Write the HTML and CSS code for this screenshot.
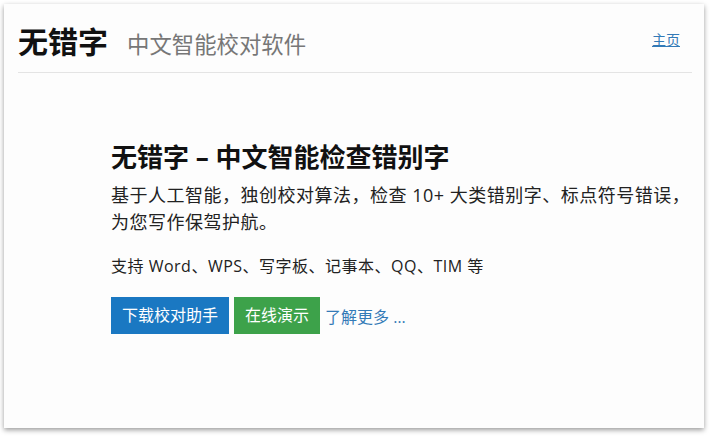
FILE: index.html
```html
<!DOCTYPE html>
<html lang="zh-CN">
<head>
  <meta charset="UTF-8" />
  <meta name="viewport" content="width=device-width, initial-scale=1.0"/>
  <title>无错字 - 中文智能校对软件</title>
  <link rel="stylesheet" href="styles.css">
</head>
<body>
  <div class="page">
    <div class="header">
      <div class="brand">
        <span class="logo">无错字</span>
        <span class="tagline">中文智能校对软件</span>
      </div>
      <a class="nav-link" href="#">主页</a>
    </div>

    <div class="hero">
      <h1>无错字 – 中文智能检查错别字</h1>
      <p class="lead">基于人工智能，独创校对算法，检查 10+ 大类错别字、标点符号错误，为您写作保驾护航。</p>
      <p class="support">支持 Word、WPS、写字板、记事本、QQ、TIM 等</p>
      <div class="actions">
        <a class="btn btn-blue" href="#">下载校对助手</a>
        <a class="btn btn-green" href="#">在线演示</a>
        <a class="more" href="#">了解更多 …</a>
      </div>
    </div>
  </div>
</body>
</html>
```

FILE: styles.css
```css
body {
  margin: 0;
  padding: 4px 7px 9px 4px;
  background-color: #fff;
  font-family: "Open Sans", "Noto Sans CJK SC", sans-serif;
  color: #222;
}

.page {
  height: 424px;
  padding: 0 12px 0 14px;
  background-color: #fdfdfd;
  box-shadow: 0 2px 5px rgba(0, 0, 0, 0.4);
  box-sizing: border-box;
}

.header {
  display: flex;
  justify-content: space-between;
  align-items: center;
  height: 68px;
  border-bottom: 1px solid #e4e4e4;
  font-family: "Noto Sans CJK SC", sans-serif;
}

.brand {
  display: flex;
  align-items: baseline;
  gap: 19px;
  padding-top: 4px;
}

.logo {
  font-size: 30px;
  font-weight: bold;
  color: #111;
}

.tagline {
  font-size: 22.4px;
  color: #777;
}

.nav-link {
  font-size: 14px;
  color: #337ab7;
  margin-right: 12px;
  padding-top: 2px;
}

.hero {
  padding: 64px 0 0 93px;
  max-width: 580px;
}

.hero h1 {
  margin: 0;
  font-size: 26px;
  font-weight: bold;
  color: #111;
  line-height: 40px;
}

.lead {
  margin: 5px 0 0;
  font-size: 18px;
  line-height: 27px;
  letter-spacing: 0.5px;
  color: #222;
}

.support {
  margin: 17px 0 0;
  font-size: 16px;
  line-height: 26px;
  letter-spacing: 0.5px;
}

.actions {
  display: flex;
  align-items: center;
  gap: 5px;
  margin-top: 18px;
}

.btn {
  display: block;
  padding: 0 11px;
  line-height: 37px;
  font-size: 16px;
  color: #fff;
  text-decoration: none;
}

.btn-blue {
  background-color: #1a78c2;
}

.btn-green {
  background-color: #3da24a;
}

.more {
  font-size: 16px;
  color: #337ab7;
  text-decoration: none;
}
```
